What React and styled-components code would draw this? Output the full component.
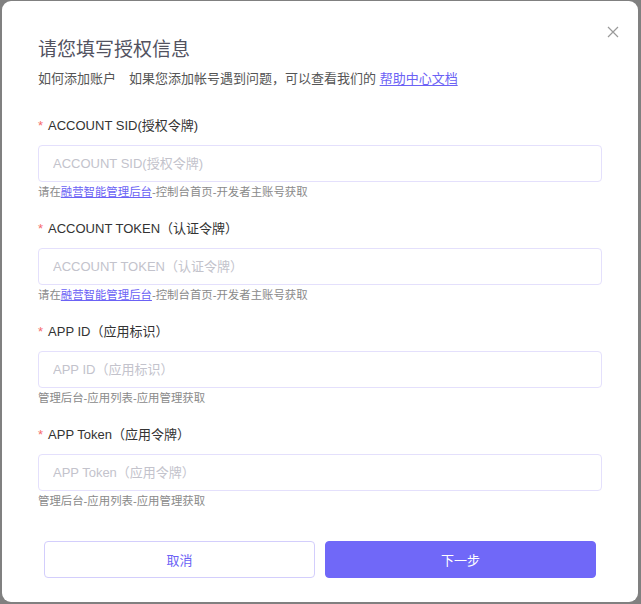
import styled, { createGlobalStyle } from "styled-components";

const GlobalStyle = createGlobalStyle`
  html, body {
    margin: 0;
    padding: 0;
    background: #808080;
  }
  body {
    font-family: "Liberation Sans", "Noto Sans CJK SC", sans-serif;
  }
  * {
    box-sizing: border-box;
  }
`;

const Modal = styled.div`
  position: relative;
  width: 636px;
  height: 601px;
  margin: 1px 0 0 2px;
  background: #ffffff;
  border-radius: 9px;
  padding: 35px 36px 0;
  display: flex;
  flex-direction: column;
`;

const Close = styled.button`
  position: absolute;
  top: 25px;
  right: 19px;
  width: 12px;
  height: 12px;
  padding: 0;
  border: none;
  background: none;
  cursor: pointer;
  svg {
    display: block;
  }
`;

const Title = styled.h2`
  margin: 0;
  font-size: 19px;
  line-height: 28px;
  font-weight: 400;
  color: #52525f;
`;

const Sub = styled.p`
  margin: 5px 0 0;
  font-size: 13px;
  line-height: 20px;
  color: #555555;
  span {
    margin-right: 13px;
  }
`;

const Link = styled.a`
  color: #6b62f5;
  text-decoration: underline;
  text-underline-offset: 2px;
  cursor: pointer;
`;

const Form = styled.div`
  margin-top: 27px;
  display: flex;
  flex-direction: column;
  gap: 18px;
`;

const Field = styled.div`
  display: flex;
  flex-direction: column;
`;

const Label = styled.label`
  font-size: 13px;
  line-height: 20px;
  color: #333333;
  &::before {
    content: "*";
    color: #f56c6c;
    margin-right: 5px;
  }
`;

const Input = styled.input`
  margin-top: 9px;
  width: 100%;
  height: 37px;
  padding: 0 14px;
  border: 1px solid #e4e0fc;
  border-radius: 4px;
  font-family: inherit;
  font-size: 13px;
  color: #333;
  outline: none;
  &::placeholder {
    color: #c3c3cc;
  }
`;

const Hint = styled.div`
  margin-top: 1px;
  font-size: 11.4px;
  line-height: 18px;
  color: #8a8a8a;
  a {
    text-underline-offset: 1px;
  }
`;

const Footer = styled.div`
  margin-top: 31px;
  padding: 0 6px;
  display: flex;
  gap: 10px;
`;

const Button = styled.button`
  flex: 1;
  height: 37px;
  border-radius: 4px;
  font-family: inherit;
  font-size: 13px;
  cursor: pointer;
  border: 1px solid ${(p) => (p.$primary ? "#7068f8" : "#d3cefc")};
  background: ${(p) => (p.$primary ? "#7068f8" : "#ffffff")};
  color: ${(p) => (p.$primary ? "#ffffff" : "#6b62f5")};
`;

const fields = [
  {
    label: "ACCOUNT SID(授权令牌)",
    hint: "link",
  },
  {
    label: "ACCOUNT TOKEN（认证令牌）",
    hint: "link",
  },
  {
    label: "APP ID（应用标识）",
    hint: "管理后台-应用列表-应用管理获取",
  },
  {
    label: "APP Token（应用令牌）",
    hint: "管理后台-应用列表-应用管理获取",
  },
];

export default function App() {
  return (
    <>
      <GlobalStyle />
      <Modal>
        <Close aria-label="关闭">
          <svg width="12" height="12" viewBox="0 0 12 12">
            <path d="M1 1L11 11M11 1L1 11" stroke="#9a9a9a" strokeWidth="1.2" />
          </svg>
        </Close>
        <Title>请您填写授权信息</Title>
        <Sub>
          <span>如何添加账户</span>
          如果您添加帐号遇到问题，可以查看我们的 <Link>帮助中心文档</Link>
        </Sub>
        <Form>
          {fields.map((f) => (
            <Field key={f.label}>
              <Label>{f.label}</Label>
              <Input placeholder={f.label} />
              <Hint>
                {f.hint === "link" ? (
                  <>
                    请在<Link>融营智能管理后台</Link>-控制台首页-开发者主账号获取
                  </>
                ) : (
                  f.hint
                )}
              </Hint>
            </Field>
          ))}
        </Form>
        <Footer>
          <Button>取消</Button>
          <Button $primary>下一步</Button>
        </Footer>
      </Modal>
    </>
  );
}
